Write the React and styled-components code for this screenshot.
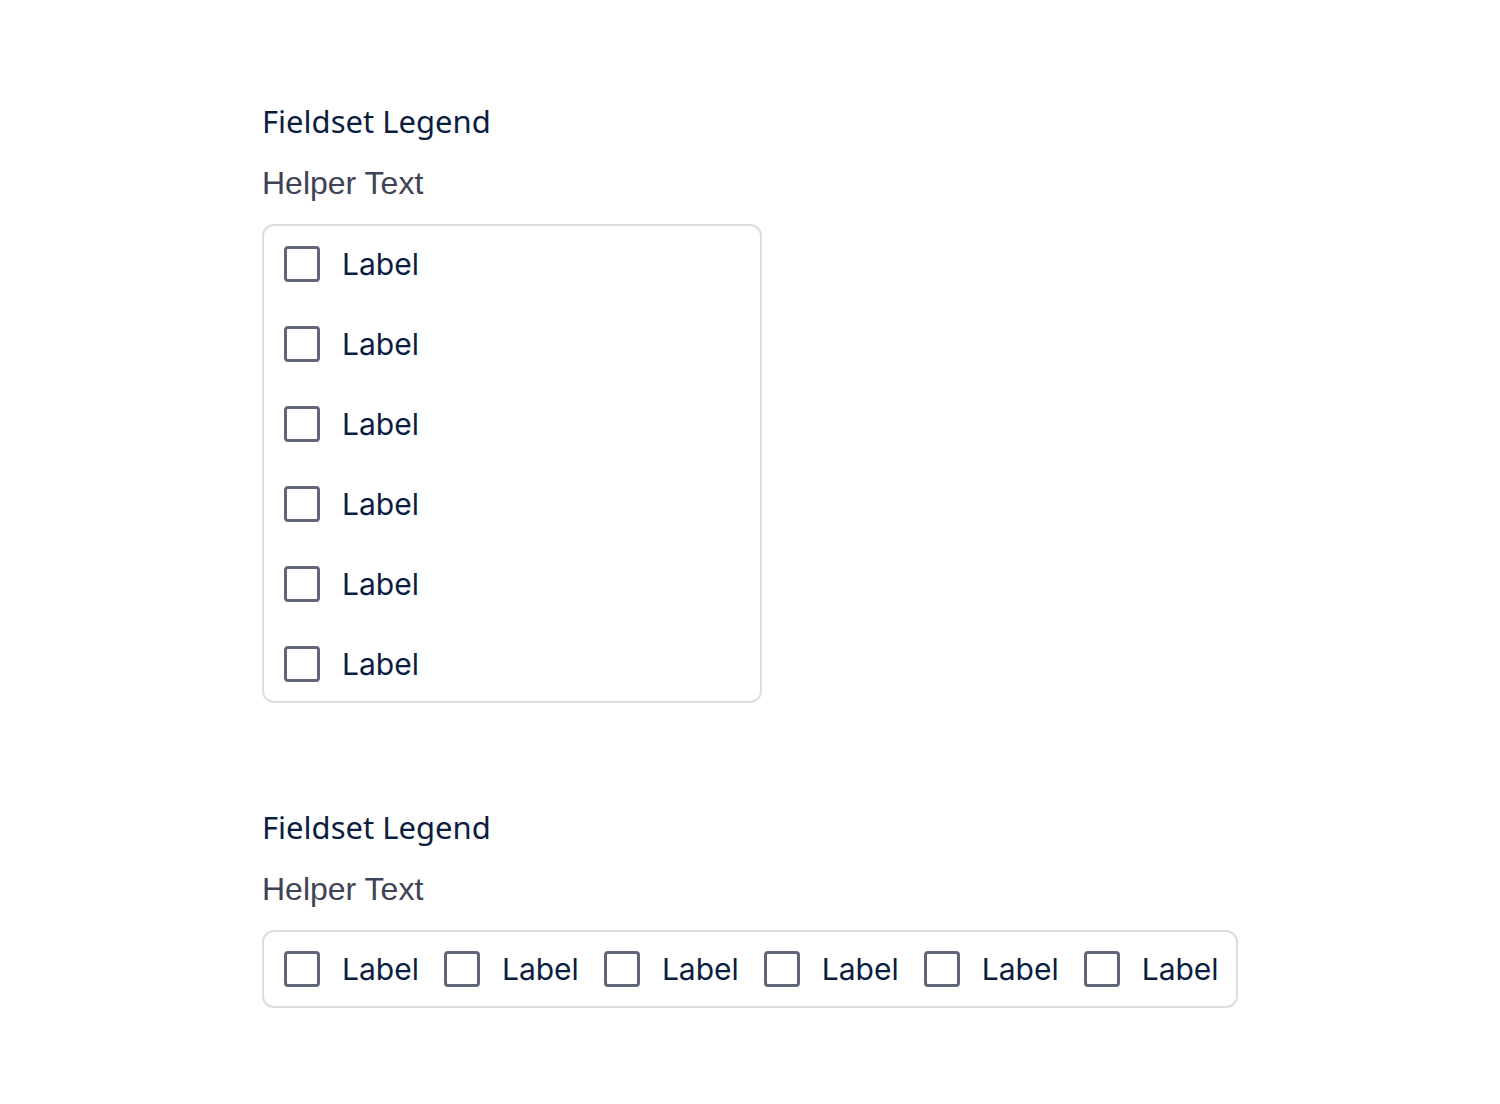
import React from 'react';
import styled, { createGlobalStyle } from 'styled-components';

const GlobalStyle = createGlobalStyle`
  body {
    margin: 0;
    background: #ffffff;
    font-family: "Liberation Sans", Arial, sans-serif;
  }
`;

const Page = styled.div`
  width: 976px;
  margin: 0 auto;
  padding-top: 97px;
  display: flex;
  flex-direction: column;
  gap: 100px;
`;

const Fieldset = styled.fieldset`
  margin: 0;
  padding: 0;
  border: none;
  min-width: 0;
  display: flex;
  flex-direction: column;
  align-items: flex-start;
`;

const Legend = styled.legend`
  padding: 0;
  font-family: "Noto Sans", "Open Sans", sans-serif;
  font-size: 31px;
  line-height: 48px;
  color: #0c1e3f;
`;

const Helper = styled.div`
  margin-top: 20px;
  font-family: "Liberation Sans", Arial, sans-serif;
  font-size: 32px;
  line-height: 36px;
  color: #3f4356;
`;

const Group = styled.div`
  margin-top: 23px;
  box-sizing: border-box;
  width: ${p => (p.$horizontal ? 'auto' : '500px')};
  border: 2px solid #dddddd;
  border-radius: 12px;
  padding: ${p => (p.$horizontal ? '17px 17px 17px 18px' : '18px 17px 17px 18px')};
  display: flex;
  flex-direction: ${p => (p.$horizontal ? 'row' : 'column')};
  gap: ${p => (p.$horizontal ? '23px' : '40px')};
`;

const Option = styled.label`
  height: 40px;
  display: flex;
  align-items: center;
  gap: 22px;
  cursor: pointer;
`;

const Box = styled.span`
  box-sizing: border-box;
  width: 36px;
  height: 36px;
  margin-left: 2px;
  border: 3px solid #606677;
  border-radius: 4px;
  background: #ffffff;
  flex-shrink: 0;
`;

const Text = styled.span`
  font-family: Inter, "Liberation Sans", sans-serif;
  font-size: 30px;
  color: #0c1e3f;
`;

const labels = ['Label', 'Label', 'Label', 'Label', 'Label', 'Label'];

function CheckboxFieldset({ horizontal }) {
  return (
    <Fieldset>
      <Legend>Fieldset Legend</Legend>
      <Helper>Helper Text</Helper>
      <Group $horizontal={horizontal}>
        {labels.map((l, i) => (
          <Option key={i}>
            <Box />
            <Text>{l}</Text>
          </Option>
        ))}
      </Group>
    </Fieldset>
  );
}

export default function App() {
  return (
    <>
      <GlobalStyle />
      <Page>
        <CheckboxFieldset />
        <CheckboxFieldset horizontal />
      </Page>
    </>
  );
}
